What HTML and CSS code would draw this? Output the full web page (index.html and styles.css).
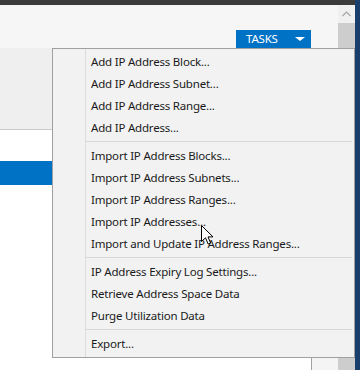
FILE: index.html
```html
<!DOCTYPE html>
<html lang="en">
<head>
    <meta charset="UTF-8">
    <title>IPAM Tasks</title>
    <link rel="stylesheet" href="styles.css">
</head>
<body>
    <div class="window">
        <div class="main">
            <div class="titlebar"></div>
            <div class="body-row">
                <div class="content">
                    <div class="header">
                        <button class="tasks-button">TASKS <span class="caret"></span></button>
                    </div>
                    <div class="subheader"></div>
                    <div class="panes">
                        <div class="list">
                            <div class="list-row selected"></div>
                        </div>
                        <div class="side-pane"></div>
                    </div>
                </div>
                <div class="scrollbar">
                    <div class="scroll-up">
                        <svg width="9" height="6" viewBox="0 0 9 6"><path d="M0.5 5 L4.5 1 L8.5 5" fill="none" stroke="#a6a6a6" stroke-width="1.2"/></svg>
                    </div>
                    <div class="scroll-thumb"></div>
                </div>
            </div>
        </div>
        <div class="edge"></div>
    </div>

    <!-- Tasks dropdown -->
    <div class="menu">
        <div class="menu-item">Add IP Address Block...</div>
        <div class="menu-item">Add IP Address Subnet...</div>
        <div class="menu-item">Add IP Address Range...</div>
        <div class="menu-item">Add IP Address...</div>
        <div class="menu-sep"></div>
        <div class="menu-item">Import IP Address Blocks...</div>
        <div class="menu-item">Import IP Address Subnets...</div>
        <div class="menu-item">Import IP Address Ranges...</div>
        <div class="menu-item">Import IP Addresses...</div>
        <div class="menu-item">Import and Update IP Address Ranges...</div>
        <div class="menu-sep"></div>
        <div class="menu-item">IP Address Expiry Log Settings...</div>
        <div class="menu-item">Retrieve Address Space Data</div>
        <div class="menu-item">Purge Utilization Data</div>
        <div class="menu-sep"></div>
        <div class="menu-item">Export...</div>
    </div>

    <svg class="cursor" width="13" height="20" viewBox="0 0 13 20">
        <path d="M0.5 0.5 L0.5 16.5 L4.5 12.8 L7.2 19 L9.6 18 L7 11.9 L12 11.9 Z" fill="#fff" stroke="#000" stroke-width="1" stroke-linejoin="miter"/>
    </svg>
</body>
</html>
```

FILE: styles.css
```css
body {
    margin: 0;
    padding: 0;
    width: 360px;
    height: 370px;
    overflow: hidden;
    font-family: "Noto Sans", "Open Sans", sans-serif;
    color: #1a1a1a;
    position: relative;
}

.window {
    display: flex;
    height: 370px;
}

.main {
    flex: 1;
    display: flex;
    flex-direction: column;
}

.titlebar {
    height: 5px;
    background-color: #3b3b3b;
}

.body-row {
    flex: 1;
    display: flex;
}

.content {
    flex: 1;
    display: flex;
    flex-direction: column;
}

.header {
    height: 43px;
    background-color: #f6f6f6;
    display: flex;
    justify-content: flex-end;
    align-items: flex-end;
    padding-right: 27px;
}

.tasks-button {
    width: 75px;
    height: 18px;
    background-color: #0072c6;
    color: #fff;
    border: none;
    font-family: "Noto Sans", sans-serif;
    font-size: 11.5px;
    letter-spacing: -0.2px;
    line-height: 18px;
    padding: 0 0 0 10px;
    text-align: left;
    display: flex;
    align-items: center;
    gap: 17px;
}

.caret {
    width: 0;
    height: 0;
    border-left: 5px solid transparent;
    border-right: 5px solid transparent;
    border-top: 4px solid #fff;
}

.subheader {
    height: 81px;
    background-color: #efefef;
    border-bottom: 1px solid #cbcbcb;
}

.panes {
    flex: 1;
    display: flex;
}

.list {
    width: 311px;
    background-color: #fff;
    padding-top: 31px;
}

.list-row {
    height: 24px;
}

.list-row.selected {
    background-color: #0072c6;
}

.side-pane {
    flex: 1;
    background-color: #f4f4f4;
    border-left: 1px solid #a0a0a0;
}

.scrollbar {
    width: 17px;
    background-color: #cdcdcd;
    display: flex;
    flex-direction: column;
}

.scroll-up {
    height: 18px;
    background-color: #f0f0f0;
    display: flex;
    justify-content: center;
    align-items: center;
}

.edge {
    width: 5px;
    background-color: #1b3f6c;
}

/* dropdown */
.menu {
    position: absolute;
    left: 52px;
    top: 48px;
    width: 301px;
    border: 1px solid #a0a0a0;
    background: linear-gradient(to right, transparent 32px, #dcdcdc 32px, #dcdcdc 33px, transparent 33px), #f2f2f2;
    padding: 2px 0;
    font-size: 11.5px;
    letter-spacing: -0.2px;
}

.menu-item {
    height: 22px;
    line-height: 22px;
    padding-left: 38px;
    white-space: nowrap;
}

.menu-sep {
    height: 1px;
    background-color: #d7d7d7;
    margin: 2px 2px 3px 33px;
}

.cursor {
    position: absolute;
    left: 201px;
    top: 225px;
}
```
